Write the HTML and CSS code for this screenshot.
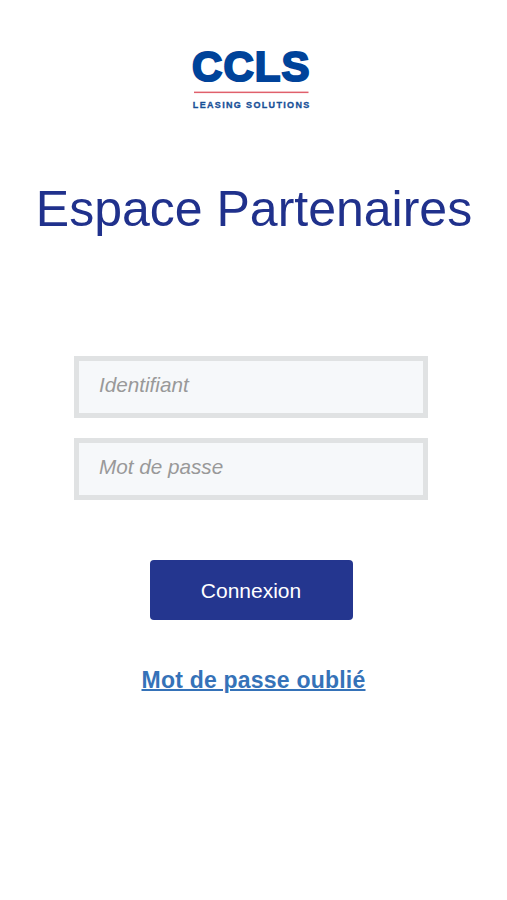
FILE: index.html
```html
<!DOCTYPE html>
<html lang="fr">
<head>
<meta charset="utf-8">
<title>Espace Partenaires</title>
<link rel="stylesheet" href="styles.css">
</head>
<body>
<main class="login">
  <header class="logo">
    <svg class="logo-svg" viewBox="0 0 120 64" width="120" height="64" role="img">
      <text class="brand" x="1 32.4 63.8 90.4" y="33.2">CCLS</text>
      <rect class="rule" x="3" y="43.6" width="114.5" height="1.5"/>
      <text class="tagline" x="1.8" y="60.2" textLength="116.5">LEASING SOLUTIONS</text>
    </svg>
  </header>
  <h1 class="title">Espace Partenaires</h1>
  <form class="form">
    <input class="field" type="text" placeholder="Identifiant">
    <input class="field" type="password" placeholder="Mot de passe">
    <button class="submit" type="button">Connexion</button>
  </form>
  <a class="forgot" href="#">Mot de passe oublié</a>
</main>
</body>
</html>
```

FILE: styles.css
```css
* { box-sizing: border-box; }
body {
  margin: 0;
  background: #fff;
  font-family: "Liberation Sans", Arial, sans-serif;
}
.login {
  display: flex;
  flex-direction: column;
  align-items: center;
  min-height: 900px;
  padding-top: 48px;
}
.logo { height: 64px; margin-right: 5px; }
.logo-svg { display: block; overflow: visible; }
.brand { font-size: 42px; font-weight: 700; fill: #00439a; stroke: #00439a; stroke-width: 2.1; }
.rule { fill: #e0606c; }
.tagline { font-size: 9px; font-weight: 700; fill: #174f97; stroke: #174f97; stroke-width: .3; }
.title {
  margin: 68px 0 0;
  padding-left: 1px;
  font-size: 50px;
  line-height: 58px;
  font-weight: 400;
  color: #20318c;
  white-space: nowrap;
}
.form {
  display: flex;
  flex-direction: column;
  align-items: center;
  gap: 20px;
  margin: 118px 5px 0 0;
}
.field {
  width: 354px;
  height: 62px;
  padding: 0 20px 5px;
  border: 5px solid #e0e2e3;
  border-radius: 0;
  background: #f6f8fa;
  font: italic 20.7px "Liberation Sans", Arial, sans-serif;
}
.field::placeholder { color: #999; opacity: 1; }
.submit {
  width: 203px;
  height: 60px;
  margin: 40px 0 0;
  padding: 2px 0 0;
  border: 0;
  border-radius: 4px;
  background: #24368f;
  color: #fff;
  font: 21px "Liberation Sans", Arial, sans-serif;
}
.forgot {
  margin-top: 46px;
  font-size: 23px;
  line-height: 28px;
  font-weight: 700;
  letter-spacing: .22px;
  color: #3572b8;
  text-decoration-thickness: 1.5px;
}
```
